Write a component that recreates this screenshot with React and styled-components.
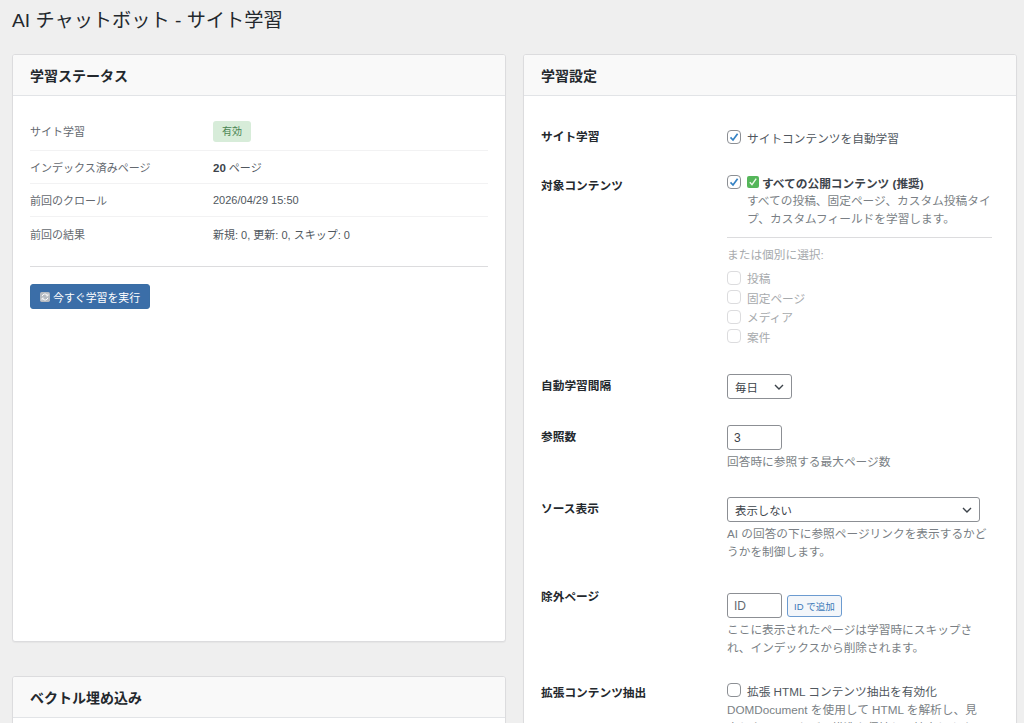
import React from "react";
import styled, { createGlobalStyle } from "styled-components";

const GlobalStyle = createGlobalStyle`
  html, body {
    margin: 0;
    height: 723px;
    overflow: hidden;
    background: #efefef;
  }
  body {
    font-family: "Liberation Sans", "Noto Sans CJK JP", sans-serif;
    color: #3c434a;
    text-spacing-trim: space-all;
  }
`;

const Page = styled.div`
  padding: 0 7px 0 12px;
`;

const PageTitle = styled.h1`
  margin: 0;
  height: 54px;
  padding-top: 8px;
  box-sizing: border-box;
  font-size: 19.2px;
  line-height: 26px;
  font-weight: 400;
  color: #23282d;
`;

const Columns = styled.div`
  display: grid;
  grid-template-columns: 494px 494px;
  gap: 17px;
  align-items: start;
`;

const Stack = styled.div`
  display: flex;
  flex-direction: column;
  gap: 34px;
`;

const Card = styled.section`
  background: #fff;
  border: 1px solid #dcdcde;
  border-radius: 3px;
  box-shadow: 0 1px 1px rgba(0, 0, 0, 0.04);
  box-sizing: border-box;
  height: ${(p) => p.$height || "auto"};
  overflow: hidden;
`;

const CardHeader = styled.h2`
  margin: 0;
  height: 41px;
  padding: 0 17px;
  display: flex;
  align-items: center;
  box-sizing: border-box;
  background: #f9f9f9;
  border-bottom: 1px solid #e2e4e7;
  font-size: 14px;
  font-weight: 700;
  color: #23282d;
`;

const StatusBody = styled.div`
  padding: 20px 17px 0;
`;

const StatusRow = styled.div`
  display: grid;
  grid-template-columns: 183px 1fr;
  align-items: center;
  height: ${(p) => p.$height}px;
  padding-bottom: ${(p) => p.$lift || 0}px;
  border-bottom: ${(p) => (p.$last ? "none" : "1px solid #f2f2f3")};
  box-sizing: border-box;
  font-size: 11px;
  color: #50575e;
`;

const StatusLabel = styled.span`
  color: #646970;
`;

const Badge = styled.span`
  display: inline-block;
  padding: 3px 9px;
  border-radius: 3px;
  background: #d7ecd9;
  color: #4a8553;
  font-size: 10px;
  line-height: 15px;
  vertical-align: middle;
`;

const Count = styled.strong`
  font-weight: 700;
  font-size: 11.5px;
  color: #3c434a;
`;

const Divider = styled.hr`
  margin: ${(p) => p.$margin || "0"};
  border: 0;
  border-top: 1px solid ${(p) => p.$color || "#dcdcde"};
`;

const PrimaryButton = styled.button`
  display: inline-flex;
  align-items: center;
  gap: 3px;
  height: 25px;
  padding: 0 9px;
  border: 1px solid #3a6ea5;
  border-radius: 3px;
  background: #3b6ea8;
  color: #fff;
  font: inherit;
  font-size: 10.9px;
`;

const FormBody = styled.div`
  padding: 29px 17px 0;
`;

const FormRow = styled.div`
  display: grid;
  grid-template-columns: 186px 1fr;
  margin-bottom: ${(p) => p.$gap}px;
`;

const FieldLabel = styled.div`
  font-size: 11.7px;
  font-weight: 700;
  line-height: 24px;
  color: #23282d;
`;

const Field = styled.div`
  min-width: 0;
  width: 265px;
  padding-top: ${(p) => p.$top || 0}px;
`;

const CheckRow = styled.label`
  display: flex;
  align-items: center;
  gap: 6px;
  height: ${(p) => p.$height || 24}px;
  font-size: 11.7px;
  color: ${(p) => (p.$muted ? "#a7aaad" : "#50575e")};
`;

const Box = styled.span`
  width: 12px;
  height: 12px;
  flex: none;
  display: flex;
  align-items: center;
  justify-content: center;
  border: 1px solid ${(p) => (p.$muted ? "#dcdcde" : "#8c8f94")};
  border-radius: 4px;
  background: #fff;
`;

const StrongText = styled.strong`
  display: inline-flex;
  align-items: center;
  gap: 3px;
  color: #3c434a;
`;

const Help = styled.p`
  margin: ${(p) => p.$margin || "0"};
  max-width: ${(p) => p.$maxWidth || "none"};
  font-size: 11.7px;
  line-height: 18px;
  color: #7a7f85;
`;

const MutedHeading = styled.div`
  font-size: 11.7px;
  line-height: 18px;
  color: #a7aaad;
  margin-bottom: 4px;
`;

const SelectBox = styled.div`
  width: ${(p) => p.$width}px;
  height: 25px;
  padding: 0 7px;
  display: flex;
  align-items: center;
  justify-content: space-between;
  box-sizing: border-box;
  border: 1px solid #8c8f94;
  border-radius: 3px;
  background: #fff;
  font-size: 11.4px;
  color: #3c434a;
`;

const TextBox = styled.div`
  width: 55px;
  height: 25px;
  padding: 0 6px;
  display: flex;
  align-items: center;
  box-sizing: border-box;
  border: 1px solid #8c8f94;
  border-radius: 3px;
  background: #fff;
  font-size: 12px;
  color: ${(p) => (p.$placeholder ? "#646970" : "#3c434a")};
`;

const InlineRow = styled.div`
  display: flex;
  align-items: center;
  gap: 5px;
`;

const SecondaryButton = styled.button`
  height: 22px;
  padding: 0 6px;
  border: 1px solid #6c9bd0;
  border-radius: 3px;
  background: #f3f6fa;
  color: #3b78b8;
  font: inherit;
  font-size: 9.5px;
`;

const Tick = () => (
  <svg width="10" height="10" viewBox="0 0 10 10" aria-hidden="true">
    <path d="M1.5 5.4 4 8 8.6 1.8" fill="none" stroke="#3582c4" strokeWidth="1.7" />
  </svg>
);

const Chevron = () => (
  <svg width="10" height="6" viewBox="0 0 10 6" aria-hidden="true">
    <path d="M1 1l4 4 4-4" fill="none" stroke="#3c434a" strokeWidth="1.4" />
  </svg>
);

const GreenCheck = () => (
  <svg width="12" height="12" viewBox="0 0 12 12" aria-hidden="true">
    <rect width="12" height="12" rx="2" fill="#55b65a" />
    <path d="M2.8 6.2 5 8.6 9.2 2.6" fill="none" stroke="#eef8ea" strokeWidth="1.4" />
  </svg>
);

const SyncIcon = () => (
  <svg width="10" height="10" viewBox="0 0 12 12" aria-hidden="true">
    <rect width="12" height="12" rx="2" fill="#b4bac1" />
    <path d="M2.5 5A3.6 3.6 0 0 1 9 4M9.5 7A3.6 3.6 0 0 1 3 8" fill="none" stroke="#fff" strokeWidth="1.2" />
    <path d="M9.6 2v2.6H7M2.4 10V7.4H5" fill="none" stroke="#fff" strokeWidth="1" />
  </svg>
);

export default function App() {
  return (
    <Page>
      <GlobalStyle />
      <PageTitle>AI チャットボット - サイト学習</PageTitle>
      <Columns>
        <Stack>
          <Card $height="588px">
            <CardHeader>学習ステータス</CardHeader>
            <StatusBody>
              <StatusRow $height={35} $lift={4}>
                <StatusLabel>サイト学習</StatusLabel>
                <span><Badge>有効</Badge></span>
              </StatusRow>
              <StatusRow $height={33}>
                <StatusLabel>インデックス済みページ</StatusLabel>
                <span><Count>20</Count> ページ</span>
              </StatusRow>
              <StatusRow $height={33}>
                <StatusLabel>前回のクロール</StatusLabel>
                <span>2026/04/29 15:50</span>
              </StatusRow>
              <StatusRow $height={33} $last>
                <StatusLabel>前回の結果</StatusLabel>
                <span>新規: 0, 更新: 0, スキップ: 0</span>
              </StatusRow>
              <Divider $margin="16px 0 17px" />
              <PrimaryButton><SyncIcon />今すぐ学習を実行</PrimaryButton>
            </StatusBody>
          </Card>
          <Card $height="120px">
            <CardHeader>ベクトル埋め込み</CardHeader>
          </Card>
        </Stack>
        <Card>
          <CardHeader>学習設定</CardHeader>
          <FormBody>
            <FormRow $gap={25}>
              <FieldLabel>サイト学習</FieldLabel>
              <Field>
                <CheckRow><Box><Tick /></Box>サイトコンテンツを自動学習</CheckRow>
              </Field>
            </FormRow>
            <FormRow $gap={28}>
              <FieldLabel>対象コンテンツ</FieldLabel>
              <Field>
                <CheckRow $height={16}>
                  <Box><Tick /></Box>
                  <StrongText><GreenCheck />すべての公開コンテンツ (推奨)</StrongText>
                </CheckRow>
                <Help $margin="2px 0 0 20px">すべての投稿、固定ページ、カスタム投稿タイプ、カスタムフィールドを学習します。</Help>
                <Divider $margin="9px 0 8px" />
                <MutedHeading>または個別に選択:</MutedHeading>
                <CheckRow $muted $height={19.5}><Box $muted />投稿</CheckRow>
                <CheckRow $muted $height={19.5}><Box $muted />固定ページ</CheckRow>
                <CheckRow $muted $height={19.5}><Box $muted />メディア</CheckRow>
                <CheckRow $muted $height={19.5}><Box $muted />案件</CheckRow>
              </Field>
            </FormRow>
            <FormRow $gap={26}>
              <FieldLabel>自動学習間隔</FieldLabel>
              <Field>
                <SelectBox $width={65}>毎日<Chevron /></SelectBox>
              </Field>
            </FormRow>
            <FormRow $gap={26}>
              <FieldLabel>参照数</FieldLabel>
              <Field>
                <TextBox>3</TextBox>
                <Help $margin="3px 0 0">回答時に参照する最大ページ数</Help>
              </Field>
            </FormRow>
            <FormRow $gap={24}>
              <FieldLabel>ソース表示</FieldLabel>
              <Field>
                <SelectBox $width={253}>表示しない<Chevron /></SelectBox>
                <Help $margin="3px 0 0">AI の回答の下に参照ページリンクを表示するかどうかを制御します。</Help>
              </Field>
            </FormRow>
            <FormRow $gap={24}>
              <FieldLabel>除外ページ</FieldLabel>
              <Field $top={8}>
                <InlineRow>
                  <TextBox $placeholder>ID</TextBox>
                  <SecondaryButton>ID で追加</SecondaryButton>
                </InlineRow>
                <Help $margin="3px 0 0">ここに表示されたページは学習時にスキップされ、インデックスから削除されます。</Help>
              </Field>
            </FormRow>
            <FormRow $gap={20}>
              <FieldLabel>拡張コンテンツ抽出</FieldLabel>
              <Field>
                <CheckRow $height={18}><Box />拡張 HTML コンテンツ抽出を有効化</CheckRow>
                <Help $margin="2px 0 0" $maxWidth="258px">DOMDocument を使用して HTML を解析し、見出しやリストなどの構造を保持して抽出します。</Help>
              </Field>
            </FormRow>
          </FormBody>
        </Card>
      </Columns>
    </Page>
  );
}
